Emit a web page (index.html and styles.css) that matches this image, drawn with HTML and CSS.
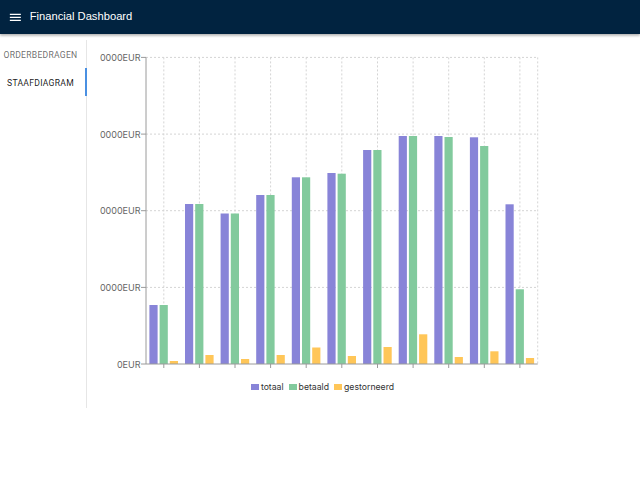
FILE: index.html
```html
<!DOCTYPE html>
<html lang="nl">
<head>
<meta charset="utf-8">
<title>Financial Dashboard</title>
<link rel="stylesheet" href="styles.css">
</head>
<body>
<header class="appbar">
  <svg class="menu-icon" viewBox="0 0 24 24" aria-hidden="true"><path d="M3 18h18v-2H3v2zm0-5h18v-2H3v2zm0-7v2h18V6H3z" fill="#fff"/></svg>
  <h1 class="title">Financial Dashboard</h1>
</header>
<main class="layout">
  <nav class="tabs">
    <div class="tab">ORDERBEDRAGEN</div>
    <div class="tab tab-active">STAAFDIAGRAM</div>
  </nav>
  <section class="panel">
    <svg class="chart" width="445" height="338" viewBox="0 0 445 338">
      <g class="grid">
        <line x1="46" y1="17.4" x2="437.7" y2="17.4"/>
        <line x1="46" y1="94.1" x2="437.7" y2="94.1"/>
        <line x1="46" y1="170.7" x2="437.7" y2="170.7"/>
        <line x1="46" y1="247.4" x2="437.7" y2="247.4"/>
        <line x1="63.8" y1="17.4" x2="63.8" y2="324"/>
        <line x1="99.4" y1="17.4" x2="99.4" y2="324"/>
        <line x1="135.0" y1="17.4" x2="135.0" y2="324"/>
        <line x1="170.6" y1="17.4" x2="170.6" y2="324"/>
        <line x1="206.2" y1="17.4" x2="206.2" y2="324"/>
        <line x1="241.8" y1="17.4" x2="241.8" y2="324"/>
        <line x1="277.5" y1="17.4" x2="277.5" y2="324"/>
        <line x1="313.1" y1="17.4" x2="313.1" y2="324"/>
        <line x1="348.7" y1="17.4" x2="348.7" y2="324"/>
        <line x1="384.3" y1="17.4" x2="384.3" y2="324"/>
        <line x1="419.9" y1="17.4" x2="419.9" y2="324"/>
        <line x1="437.7" y1="17.4" x2="437.7" y2="324"/>
      </g>
      <g class="bars">
        <rect class="b1" x="49.4" y="265" width="8.2" height="59"/>
        <rect class="b2" x="59.6" y="265" width="8.2" height="59"/>
        <rect class="b3" x="69.8" y="321" width="8.2" height="3"/>

        <rect class="b1" x="85.0" y="164" width="8.2" height="160"/>
        <rect class="b2" x="95.2" y="164" width="8.2" height="160"/>
        <rect class="b3" x="105.4" y="315" width="8.2" height="9"/>

        <rect class="b1" x="120.6" y="173.5" width="8.2" height="150.5"/>
        <rect class="b2" x="130.8" y="173.5" width="8.2" height="150.5"/>
        <rect class="b3" x="141.0" y="319" width="8.2" height="5"/>

        <rect class="b1" x="156.2" y="155" width="8.2" height="169"/>
        <rect class="b2" x="166.4" y="155" width="8.2" height="169"/>
        <rect class="b3" x="176.6" y="315" width="8.2" height="9"/>

        <rect class="b1" x="191.8" y="137.3" width="8.2" height="186.7"/>
        <rect class="b2" x="202.0" y="137.3" width="8.2" height="186.7"/>
        <rect class="b3" x="212.2" y="307.5" width="8.2" height="16.5"/>

        <rect class="b1" x="227.4" y="133" width="8.2" height="191"/>
        <rect class="b2" x="237.6" y="133.7" width="8.2" height="190.3"/>
        <rect class="b3" x="247.8" y="316" width="8.2" height="8"/>

        <rect class="b1" x="263.1" y="110" width="8.2" height="214"/>
        <rect class="b2" x="273.3" y="110" width="8.2" height="214"/>
        <rect class="b3" x="283.5" y="307" width="8.2" height="17"/>

        <rect class="b1" x="298.7" y="96" width="8.2" height="228"/>
        <rect class="b2" x="308.9" y="96" width="8.2" height="228"/>
        <rect class="b3" x="319.1" y="294.3" width="8.2" height="29.7"/>

        <rect class="b1" x="334.3" y="96" width="8.2" height="228"/>
        <rect class="b2" x="344.5" y="97" width="8.2" height="227"/>
        <rect class="b3" x="354.7" y="317" width="8.2" height="7"/>

        <rect class="b1" x="369.9" y="97.3" width="8.2" height="226.7"/>
        <rect class="b2" x="380.1" y="106" width="8.2" height="218"/>
        <rect class="b3" x="390.3" y="311.3" width="8.2" height="12.7"/>

        <rect class="b1" x="405.5" y="164.3" width="8.2" height="159.7"/>
        <rect class="b2" x="415.7" y="249.3" width="8.2" height="74.7"/>
        <rect class="b3" x="425.9" y="318" width="8.2" height="6"/>
      </g>
      <g class="axis">
        <line x1="46" y1="17.4" x2="46" y2="324"/>
        <line x1="46" y1="324" x2="437.7" y2="324"/>
        <line x1="41" y1="17.4" x2="46" y2="17.4"/>
        <line x1="41" y1="94.1" x2="46" y2="94.1"/>
        <line x1="41" y1="170.7" x2="46" y2="170.7"/>
        <line x1="41" y1="247.4" x2="46" y2="247.4"/>
        <line x1="41" y1="324" x2="46" y2="324"/>
        <line x1="63.8" y1="324" x2="63.8" y2="328"/>
        <line x1="99.4" y1="324" x2="99.4" y2="328"/>
        <line x1="135.0" y1="324" x2="135.0" y2="328"/>
        <line x1="170.6" y1="324" x2="170.6" y2="328"/>
        <line x1="206.2" y1="324" x2="206.2" y2="328"/>
        <line x1="241.8" y1="324" x2="241.8" y2="328"/>
        <line x1="277.5" y1="324" x2="277.5" y2="328"/>
        <line x1="313.1" y1="324" x2="313.1" y2="328"/>
        <line x1="348.7" y1="324" x2="348.7" y2="328"/>
        <line x1="384.3" y1="324" x2="384.3" y2="328"/>
        <line x1="419.9" y1="324" x2="419.9" y2="328"/>
      </g>
      <g class="ticks">
        <text x="40.5" y="17.4" dy="0.4em">40000000EUR</text>
        <text x="40.5" y="94.1" dy="0.4em">30000000EUR</text>
        <text x="40.5" y="170.7" dy="0.4em">20000000EUR</text>
        <text x="40.5" y="247.4" dy="0.4em">10000000EUR</text>
        <text x="40.5" y="324" dy="0.4em">0EUR</text>
      </g>
    </svg>
    <ul class="legend">
      <li class="legend-item"><span class="swatch sw1"></span>totaal</li>
      <li class="legend-item"><span class="swatch sw2"></span>betaald</li>
      <li class="legend-item"><span class="swatch sw3"></span>gestorneerd</li>
    </ul>
  </section>
</main>
</body>
</html>
```

FILE: styles.css
```css
* { box-sizing: border-box; }

body {
  margin: 0;
  background: #fff;
  font-family: Roboto, "Liberation Sans", Arial, sans-serif;
}

.appbar {
  height: 34px;
  background: #012340;
  display: flex;
  align-items: center;
  padding-left: 8px;
  gap: 7px;
  box-shadow: 0 1px 3px rgba(0, 0, 0, 0.25), 0 2px 2px rgba(0, 0, 0, 0.12);
  position: relative;
}

.menu-icon {
  width: 14.7px;
  height: 14.7px;
  display: block;
}

.title {
  margin: 0;
  font-family: "Liberation Sans", Arial, sans-serif;
  font-weight: 400;
  font-size: 11.2px;
  color: #fff;
  line-height: 1;
}

.layout {
  display: flex;
  margin-top: 6px;
}

.tabs {
  width: 87px;
  height: 368px;
  border-right: 1px solid #e6e6e6;
  display: flex;
  flex-direction: column;
}

.tab {
  height: 28px;
  display: flex;
  align-items: center;
  justify-content: center;
  padding-right: 4px;
  padding-top: 1px;
  font-size: 8.6px;
  font-weight: 400;
  letter-spacing: 0.03em;
  color: rgba(0, 0, 0, 0.6);
  border-right: 2px solid transparent;
  margin-right: -1px;
}

.tab-active {
  color: rgba(0, 0, 0, 0.9);
  border-right-color: #4a90e2;
}

.panel {
  padding-left: 13px;
  display: flex;
  flex-direction: column;
}

.chart {
  display: block;
  overflow: hidden;
}

.grid line {
  stroke: #d4d4d4;
  stroke-width: 1;
  stroke-dasharray: 2 2;
}

.axis line {
  stroke: #9a9a9a;
  stroke-width: 1;
}

.ticks text {
  font-family: Inter, "Liberation Sans", sans-serif;
  font-size: 9px;
  fill: #666;
  text-anchor: end;
}

.b1 { fill: #8884d8; }
.b2 { fill: #82ca9d; }
.b3 { fill: #ffc658; }

.legend {
  list-style: none;
  margin: 0;
  padding: 0;
  width: 445px;
  height: 17px;
  display: flex;
  justify-content: center;
  align-items: center;
  gap: 5px;
  font-family: Inter, "Liberation Sans", sans-serif;
  font-size: 8.7px;
  color: #333;
}

.legend-item {
  display: flex;
  align-items: center;
  gap: 2px;
}

.swatch {
  width: 8px;
  height: 6px;
  display: block;
}

.sw1 { background: #8884d8; }
.sw2 { background: #82ca9d; }
.sw3 { background: #ffc658; }
```
